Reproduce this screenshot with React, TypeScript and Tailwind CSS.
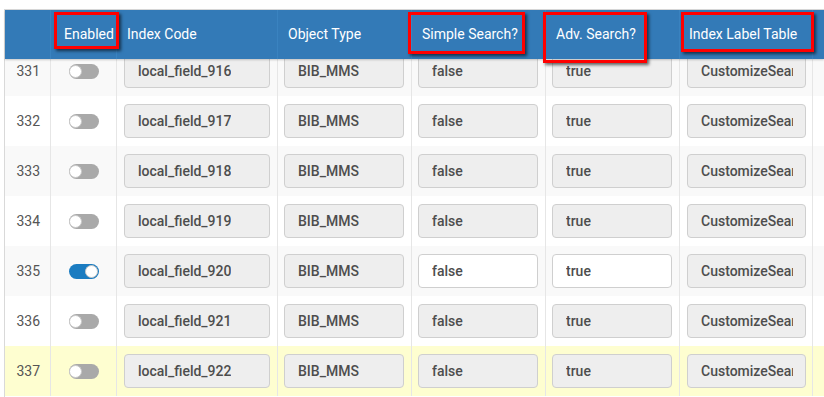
import React from "react";

type Row = {
  n: number;
  on: boolean;
  code: string;
  editable?: boolean;
  hover?: boolean;
};

const rows: Row[] = [
  { n: 331, on: false, code: "local_field_916" },
  { n: 332, on: false, code: "local_field_917" },
  { n: 333, on: false, code: "local_field_918" },
  { n: 334, on: false, code: "local_field_919" },
  { n: 335, on: true, code: "local_field_920", editable: true },
  { n: 336, on: false, code: "local_field_921" },
  { n: 337, on: false, code: "local_field_922", hover: true },
];

const cols = "grid grid-cols-[46px_66px_161px_134px_134px_134px_133px_1fr]";

function Toggle({ on }: { on: boolean }) {
  return (
    <div
      className={`relative w-[30px] h-[15px] rounded-full ${on ? "bg-[#1b7cc1]" : "bg-[#a9a9a9]"}`}
    >
      <div
        className={`absolute top-[1px] w-[13px] h-[13px] rounded-full bg-white border border-[#c8c8c8] ${on ? "right-[1px] border-[#1b7cc1]" : "left-[0px]"}`}
      />
    </div>
  );
}

function Field({ value, white }: { value: string; white?: boolean }) {
  return (
    <div
      className={`h-[34px] w-full rounded-[4px] border border-[#cfcfcf] flex items-center pl-[13px] pr-[12px] overflow-hidden whitespace-nowrap text-[14px] font-medium text-[#4d4d4d] ${white ? "bg-white" : "bg-[#eeeeee]"}`}
    >
      <span className="overflow-hidden">{value}</span>
    </div>
  );
}

function Header() {
  const cell = "flex items-center text-white text-[14px] border-r border-[#3a83c0]";
  return (
    <div className={`${cols} h-[49px] bg-[#337ab7] shadow-[0_1px_2px_rgba(0,0,0,0.2)] relative z-10`}>
      <div className={cell} />
      <div className={`${cell} pl-[13px]`}>Enabled</div>
      <div className={`${cell} pl-[10px]`}>Index Code</div>
      <div className={`${cell} pl-[10px]`}>Object Type</div>
      <div className={`${cell} pl-[10px]`}>Simple Search?</div>
      <div className={`${cell} pl-[10px]`}>Adv. Search?</div>
      <div className={`${cell} pl-[9px]`}>Index Label Table</div>
      <div />
    </div>
  );
}

function TableRow({ r, i }: { r: Row; i: number }) {
  const bg = r.hover ? "bg-[#fefed0]" : i % 2 === 0 ? "bg-[#f9f9f9]" : "bg-white";
  const cell = "flex items-center border-r border-[#e6e6e6] h-[50px]";
  return (
    <div className={`${cols} ${bg}`}>
      <div className={`${cell} justify-end pr-[10px] text-[14px] text-[#555]`}>{r.n}</div>
      <div className={`${cell} pl-[18px]`}>
        <Toggle on={r.on} />
      </div>
      <div className={`${cell} pl-[7px] pr-[7px]`}>
        <Field value={r.code} />
      </div>
      <div className={`${cell} pl-[6px] pr-[7px]`}>
        <Field value="BIB_MMS" />
      </div>
      <div className={`${cell} pl-[6px] pr-[7px]`}>
        <Field value="false" white={r.editable} />
      </div>
      <div className={`${cell} pl-[6px] pr-[7px]`}>
        <Field value="true" white={r.editable} />
      </div>
      <div className={`${cell} pl-[7px] pr-[6px]`}>
        <Field value="CustomizeSearchLabels" />
      </div>
      <div className="h-[50px]" />
    </div>
  );
}

function Mark({ className }: { className: string }) {
  return (
    <div
      className={`absolute border-[3px] border-[#ff0000] shadow-[2px_2px_3px_rgba(0,0,0,0.6)] pointer-events-none z-20 ${className}`}
    />
  );
}

export default function App() {
  return (
    <div
      className="relative w-[824px] h-[397px] overflow-hidden bg-white pt-[9px]"
      style={{ fontFamily: "Roboto, 'Liberation Sans', sans-serif" }}
    >
      <div className="h-full border-l border-t border-[#d9d9d9] ml-[4px] flex flex-col">
        <Header />
        <div className="flex-1 overflow-hidden">
          <div className="-mt-[13px]">
            {rows.map((r, i) => (
              <TableRow key={r.n} r={r} i={i} />
            ))}
          </div>
        </div>
      </div>
      <Mark className="left-[54px] top-[12px] w-[65px] h-[37px]" />
      <Mark className="left-[408px] top-[12px] w-[117px] h-[42px]" />
      <Mark className="left-[543px] top-[12px] w-[104px] h-[51px]" />
      <Mark className="left-[681px] top-[12px] w-[133px] h-[40px]" />
    </div>
  );
}
